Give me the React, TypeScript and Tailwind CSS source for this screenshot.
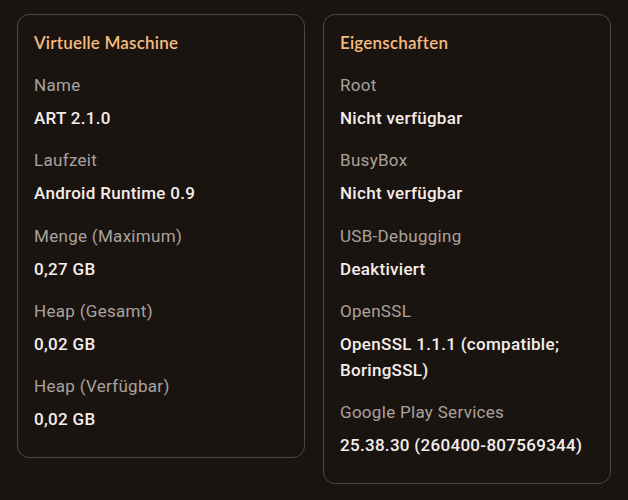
const vm = [
  { label: "Name", value: "ART 2.1.0" },
  { label: "Laufzeit", value: "Android Runtime 0.9" },
  { label: "Menge (Maximum)", value: "0,27 GB" },
  { label: "Heap (Gesamt)", value: "0,02 GB" },
  { label: "Heap (Verfügbar)", value: "0,02 GB" },
];

const props = [
  { label: "Root", value: "Nicht verfügbar" },
  { label: "BusyBox", value: "Nicht verfügbar" },
  { label: "USB-Debugging", value: "Deaktiviert" },
  { label: "OpenSSL", value: "OpenSSL 1.1.1 (compatible; BoringSSL)" },
  { label: "Google Play Services", value: "25.38.30 (260400-807569344)" },
];

type Item = { label: string; value: string };

function Card({ title, items }: { title: string; items: Item[] }) {
  return (
    <div className="flex-1 rounded-xl border border-[#4f4740] px-4 pt-4 pb-[25px]">
      <h2 className="font-['Lato',sans-serif] text-[17px] leading-6 font-semibold tracking-[0.2px] text-[#f7bb7e]">
        {title}
      </h2>
      <div className="mt-[18px] flex flex-col gap-[17.3px]">
        {items.map((it) => (
          <div key={it.label}>
            <div className="text-[17px] leading-6 tracking-[0.3px] text-[#aaa29c]">{it.label}</div>
            <div className="mt-2 text-[17px] leading-[26px] font-medium tracking-[0.3px] text-[#f6eee9]">
              {it.value}
            </div>
          </div>
        ))}
      </div>
    </div>
  );
}

export default function App() {
  return (
    <div className="min-h-[500px] w-[628px] bg-[#1a1411] font-['Roboto',sans-serif]">
      <div className="flex items-start gap-[18px] px-[17px] pt-[14px]">
        <Card title="Virtuelle Maschine" items={vm} />
        <Card title="Eigenschaften" items={props} />
      </div>
    </div>
  );
}
